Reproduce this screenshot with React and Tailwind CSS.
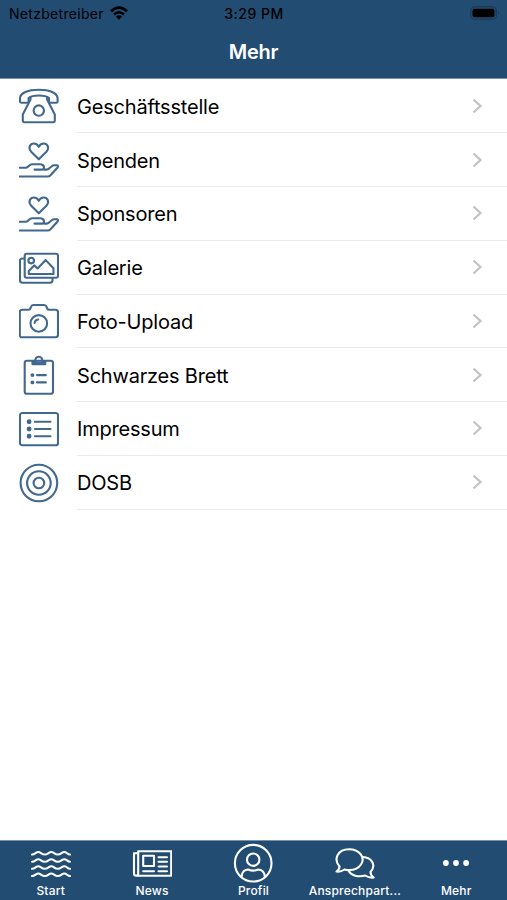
function Icon({ children, className = '' }) {
  return (
    <svg
      className={`h-10 w-10 shrink-0 ${className}`}
      viewBox="0 0 40 40"
      fill="none"
      stroke="currentColor"
      strokeWidth="2.1"
      strokeLinecap="round"
      strokeLinejoin="round"
    >
      {children}
    </svg>
  );
}

const phoneIcon = (
  <Icon>
    <path d="M1 12.500C1 7 9 3.700 19.800 3.700S38.600 7 38.600 12.500V15.500q0 1.300-1.500 1.300H31.500q-1.500 0-1.500-1.300V12Q27 9.500 19.800 9.500T9.600 12V15.500q0 1.300-1.500 1.300H2.500Q1 16.800 1 15.500Z" />
    <path d="M11.500 11.500V13.500L3.800 28.500V34.500q0 1.700 1.700 1.700H34.100q1.700 0 1.700-1.700V28.500L28.100 13.500V11.500" />
    <circle cx="19.8" cy="24.6" r="5.200" />
  </Icon>
);

const donateIcon = (
  <Icon>
    <path d="M19.800 19.300L12.200 11.700C8.500 7.500 11.500 3.500 14.800 3.500 17.400 3.500 19 5 19.800 6.800 20.600 5 22.200 3.500 24.800 3.500 28.100 3.500 31.100 7.500 27.400 11.700Z" />
    <path d="M.8 27.800H6.500Q8 27.800 9.500 26.200T13 24.300H21.500Q25 24.600 25 27.500 25 29.600 23 29.600H15.500M25 29.600H27.500Q29 29.600 30.300 28.300L32.500 26.500Q33.800 25.300 35.500 25.300H38Q39.800 25.800 38.600 27.500L31.500 35.300Q30.500 36.500 28.800 36.500H.8" />
  </Icon>
);

const galleryIcon = (
  <Icon>
    <rect x="5.700" y="5.800" width="33.300" height="24" rx="2" />
    <path d="M5.500 10.500H3.500Q1 10.500 1 13V32.300Q1 34.800 3.500 34.800H31Q33.500 34.800 33.500 32.300V30" />
    <circle cx="12.200" cy="12.600" r="2.800" />
    <path d="M9.800 26V23L15.200 17.400 18.600 20.400 26.700 12.100 34.500 20.300V26Z" />
  </Icon>
);

const cameraIcon = (
  <Icon>
    <path d="M3.200 8.700H9.500Q11.200 8.700 11.500 7L12 5.800Q12.500 4 14.300 4H25.200Q27 4 27.500 5.800L28 7Q28.300 8.700 30 8.700H36.500Q39 8.700 39 11.200V33.800Q39 36.300 36.500 36.300H3.200Q.8 36.300 .8 33.800V11.200Q.8 8.700 3.200 8.700Z" />
    <circle cx="19.800" cy="22.400" r="8.300" />
    <path d="M15.700 22Q16 18.900 19.200 18.500" />
  </Icon>
);

const boardIcon = (
  <Icon>
    <rect x="5.700" y="5.800" width="28.300" height="33" rx="2.300" />
    <path d="M13.500 6.500V9.300H26.200V6.500H23.400Q23.400 1.800 19.800 1.800T16.200 6.500Z" />
    <path d="M14.500 8H25" strokeWidth="3" />
    <path d="M18 20.100H26.800M18 27.400H26.800" />
    <path d="M13.400 20.100V20.100M13.400 27.400V27.400" strokeWidth="3.900" />
  </Icon>
);

const imprintIcon = (
  <Icon>
    <rect x="1" y="4" width="38" height="32.300" rx="2.300" />
    <path d="M16 12.700H31.500M16 20H31.500M16 27.300H31.500" />
    <path d="M10.100 12.700V12.700M10.100 20V20M10.100 27.300V27.300" strokeWidth="4.900" />
  </Icon>
);

const targetIcon = (
  <Icon>
    <circle cx="19.900" cy="20" r="18.300" />
    <circle cx="19.900" cy="20" r="11.800" />
    <circle cx="19.900" cy="20" r="5.300" />
  </Icon>
);

const menuItems = [
  { label: 'Geschäftsstelle', icon: phoneIcon },
  { label: 'Spenden', icon: donateIcon },
  { label: 'Sponsoren', icon: donateIcon },
  { label: 'Galerie', icon: galleryIcon },
  { label: 'Foto-Upload', icon: cameraIcon },
  { label: 'Schwarzes Brett', icon: boardIcon },
  { label: 'Impressum', icon: imprintIcon },
  { label: 'DOSB', icon: targetIcon },
];

const wave = 'c3 0 4-2.500 6.300-2.500s3.200 2.500 6.500 2.500 4-2.500 6.500-2.500 3.200 2.500 6.500 2.500 4-2.500 6.500-2.500 3 2.500 5.700 2.500';

const tabs = [
  {
    label: 'Start',
    icon: (
      <Icon>
        <path d={`M1 11.500${wave}`} />
        <path d={`M1 18.700${wave}`} />
        <path d={`M1 25.800${wave}`} />
        <path d={`M1 33${wave}`} />
      </Icon>
    ),
  },
  {
    label: 'News',
    icon: (
      <Icon>
        <path d="M6.200 8.200H39.200V32.700H4.500Q2 32.700 2 30.500V10.200H6.200ZM6.200 10V30.500Q6.200 32.500 4.500 32.700" />
        <path d="M11.200 12.800H22V23H11.200ZM26.500 14.300H35M26.500 18.800H35M26.500 23.500H35M26.500 28.300H35M11.200 28.300H22" />
      </Icon>
    ),
  },
  {
    label: 'Profil',
    icon: (
      <Icon>
        <circle cx="20.200" cy="20.200" r="18.300" />
        <circle cx="20.200" cy="16.700" r="6.200" />
        <path d="M8.500 33.500Q9.500 26.500 15.200 26.500 20.200 28.800 25.200 26.500 30.900 26.500 31.900 33.500" />
      </Icon>
    ),
  },
  {
    label: 'Ansprechpart...',
    icon: (
      <Icon>
        <path d="M4.500 23.500C-2 16 3 6.300 14 6.300S30.500 15 26 21.500 14.500 27.500 9.500 26.500Q6 29 1.500 28.500 4.500 26.500 4.500 23.500Z" />
        <path d="M28 14C36 14.500 42 21.500 35.500 29 35.500 31.500 36.500 33 38.700 34.500 35 35 32.500 34 30.300 32.500 23 34.500 16 32.500 13.500 27.800" />
      </Icon>
    ),
  },
  {
    label: 'Mehr',
    icon: (
      <Icon>
        <path d="M9.900 20V20M20 20V20M30.100 20V20" strokeWidth="5.800" />
      </Icon>
    ),
  },
];

function StatusBar() {
  return (
    <div className="grid h-[26.5px] grid-cols-3 items-center pl-[9px] pr-[7px] text-[14px] text-black">
      <div className="flex items-center gap-1.5">
        <span className="tracking-[0.3px]">Netzbetreiber</span>
        <svg className="h-[14px] w-[18px]" viewBox="0 0 18 14" fill="none" stroke="currentColor" strokeWidth="2.600">
          <path d="M1 5.200Q9-2 17 5.200M4 8.500Q9 4 14 8.500" />
          <path d="M6 10.500Q9 8 12 10.500L9 13.700Z" fill="currentColor" stroke="none" />
        </svg>
      </div>
      <div className="pr-px text-center font-medium tracking-[0.5px]">3:29 PM</div>
      <svg className="h-[14px] w-[30px] justify-self-end" viewBox="0 0 30 14">
        <rect x=".8" y=".8" width="25.500" height="12.400" rx="3.800" fill="none" stroke="#193958" strokeWidth="1.200" />
        <rect x="2.500" y="2.700" width="22" height="8.600" rx="2" fill="#000" />
        <path d="M28 4.800Q30 7 28 9.200Z" fill="#193958" />
      </svg>
    </div>
  );
}

export default function App() {
  return (
    <div className="flex h-[900px] w-[507px] flex-col bg-white font-['Inter',sans-serif]">
      <header className="flex h-[79px] flex-col border-b border-[#7892ab] bg-[#234c73]">
        <StatusBar />
        <h1 className="flex h-[51px] items-center justify-center text-[20px] font-semibold tracking-[-0.2px] text-white">
          Mehr
        </h1>
      </header>

      <main className="flex-1 pt-[0.6px]">
        {menuItems.map((item) => (
          <div key={item.label} className="flex h-[53.75px] items-center gap-[18px] pl-[19px] text-[#41698f]">
            {item.icon}
            <div className="flex h-full flex-1 items-center justify-between border-b border-[#e9e9ea] pr-6">
              <span className="pt-0.5 text-[20px] tracking-[-0.2px] text-black">{item.label}</span>
              <svg className="h-4 w-3" viewBox="0 0 12 16" fill="none" stroke="#c2c2c5" strokeWidth="2.200">
                <path d="M2.500 1.500L9.500 8L2.500 14.500" />
              </svg>
            </div>
          </div>
        ))}
      </main>

      <nav className="grid h-[60px] grid-cols-5 border-t border-[#7892ab] bg-[#234c73] text-white">
        {tabs.map((tab) => (
          <div key={tab.label} className="flex flex-col items-center pt-0.5">
            {tab.icon}
            <span className="text-[12px] leading-4 font-medium tracking-[0.2px] whitespace-nowrap">{tab.label}</span>
          </div>
        ))}
      </nav>
    </div>
  );
}
